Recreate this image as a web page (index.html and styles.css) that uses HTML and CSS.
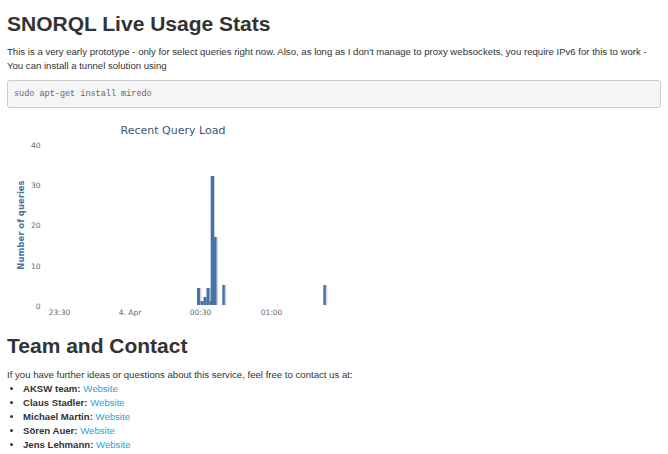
FILE: index.html
```html
<!DOCTYPE html>
<html>
<head>
<meta charset="utf-8">
<link rel="stylesheet" href="styles.css">
</head>
<body>
<div class="container">
  <h1 class="title">SNORQL Live Usage Stats</h1>
  <p class="intro">This is a very early prototype - only for select queries right now. Also, as long as I don't manage to proxy websockets, you require IPv6 for this to work - You can install a tunnel solution using</p>
  <pre class="code">sudo apt-get install miredo</pre>
  <div class="chart">
    <svg width="340" height="208" viewBox="0 0 340 208" xmlns="http://www.w3.org/2000/svg">
      <text x="166" y="19" class="c-title" text-anchor="middle">Recent Query Load</text>
      <g class="c-ylab" text-anchor="end">
        <text x="33.5" y="33">40</text>
        <text x="33.5" y="73">30</text>
        <text x="33.5" y="113">20</text>
        <text x="33.5" y="154">10</text>
        <text x="33.5" y="194">0</text>
      </g>
      <text class="c-ytitle" text-anchor="middle" transform="translate(17,110) rotate(-90)">Number of queries</text>
      <g class="c-xlab" text-anchor="middle">
        <text x="52.5" y="200">23:30</text>
        <text x="123" y="200">4. Apr</text>
        <text x="193.5" y="200">00:30</text>
        <text x="264.5" y="200">01:00</text>
      </g>
      <g class="c-shadow">
        <rect x="191" y="173" width="3.5" height="17"/>
        <rect x="194.5" y="186" width="3.5" height="4"/>
        <rect x="197.5" y="182" width="3.5" height="8"/>
        <rect x="200.5" y="173" width="3.5" height="17"/>
        <rect x="203.5" y="186" width="3" height="4"/>
        <rect x="204.5" y="61" width="3.5" height="129"/>
        <rect x="208" y="122" width="3" height="68"/>
        <rect x="216.3" y="170" width="3" height="20"/>
        <rect x="317.3" y="170" width="3" height="20"/>
      </g>
      <g class="c-bar">
        <rect x="190" y="173" width="3" height="17"/>
        <rect x="193.5" y="186" width="3" height="4"/>
        <rect x="196.5" y="182" width="3" height="8"/>
        <rect x="199.5" y="173" width="3" height="17"/>
        <rect x="202.5" y="186" width="2.5" height="4"/>
        <rect x="203.7" y="61" width="3.3" height="129"/>
        <rect x="207" y="122" width="2.5" height="68"/>
        <rect x="215.3" y="170" width="2.5" height="20"/>
        <rect x="316.3" y="170" width="2.5" height="20"/>
      </g>
    </svg>
  </div>
  <h2 class="section">Team and Contact</h2>
  <p class="lead-in">If you have further ideas or questions about this service, feel free to contact us at:</p>
  <ul class="team">
    <li><strong>AKSW team:</strong> <a href="#">Website</a></li>
    <li><strong>Claus Stadler:</strong> <a href="#">Website</a></li>
    <li><strong>Michael Martin:</strong> <a href="#">Website</a></li>
    <li><strong>Sören Auer:</strong> <a href="#">Website</a></li>
    <li><strong>Jens Lehmann:</strong> <a href="#">Website</a></li>
  </ul>
</div>
</body>
</html>
```

FILE: styles.css
```css
html, body {
  margin: 0;
  padding: 0;
  background: #fff;
}
body {
  font-family: "Liberation Sans", Arial, sans-serif;
  font-size: 9.6px;
  line-height: 14px;
  color: #333;
}
.container {
  padding: 0 7px;
}
.title {
  font-size: 21px;
  font-weight: bold;
  line-height: 23px;
  margin: 12px 0 10px;
}
.intro {
  margin: 0 0 7px;
}
.code {
  font-family: "Liberation Mono", "Courier New", monospace;
  font-size: 8.5px;
  line-height: 12px;
  color: #666;
  background: #f5f5f5;
  border: 1px solid #ccc;
  border-radius: 3px;
  padding: 7px 6px;
  margin: 0 0 7px;
}
.chart {
  height: 208px;
}
.chart svg {
  display: block;
}
.c-title {
  font-family: "DejaVu Sans", Verdana, sans-serif;
  font-size: 11px;
  fill: #3e576f;
}
.c-ylab text, .c-xlab text {
  font-family: "DejaVu Sans", Verdana, sans-serif;
  font-size: 7.5px;
  fill: #666;
}
.c-ytitle {
  font-family: "DejaVu Sans", Verdana, sans-serif;
  font-size: 8.5px;
  font-weight: bold;
  fill: #4d759e;
}
.c-bar rect {
  fill: #4572a7;
}
.c-shadow rect {
  fill: #d4d4d4;
}
.section {
  font-size: 21px;
  font-weight: bold;
  line-height: 23px;
  margin: 11px 0 11px;
}
.lead-in {
  margin: 0;
}
.team {
  margin: 0;
  padding-left: 16px;
}
.team a {
  color: #2a9fd6;
  text-decoration: none;
}
```
